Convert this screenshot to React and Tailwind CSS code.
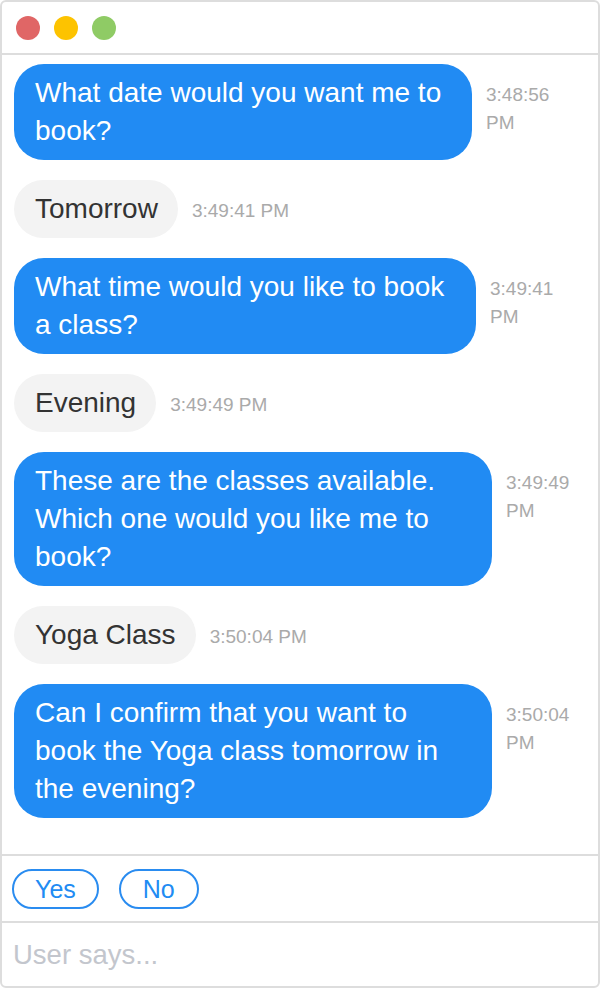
import React from 'react';

const messages = [
    { from: 'bot', lines: ['What date would you want me to', 'book?'], time: '3:48:56 PM', w: 'w-[458px]' },
    { from: 'user', lines: ['Tomorrow'], time: '3:49:41 PM' },
    { from: 'bot', lines: ['What time would you like to book', 'a class?'], time: '3:49:41 PM', w: 'w-[462px]' },
    { from: 'user', lines: ['Evening'], time: '3:49:49 PM' },
    { from: 'bot', lines: ['These are the classes available.', 'Which one would you like me to', 'book?'], time: '3:49:49 PM', w: 'w-[478px]' },
    { from: 'user', lines: ['Yoga Class'], time: '3:50:04 PM' },
    { from: 'bot', lines: ['Can I confirm that you want to', 'book the Yoga class tomorrow in', 'the evening?'], time: '3:50:04 PM', w: 'w-[478px]' },
];

const Message = ({ msg }) => {
    const isBot = msg.from === 'bot';
    return (
        <div className="flex items-start gap-[14px]">
            <div
                className={
                    isBot
                        ? `${msg.w} shrink-0 bg-[#218bf3] text-white rounded-[30px] pl-[21px] pr-[16px] py-[10px] text-[28px] leading-[38px] whitespace-nowrap`
                        : 'shrink-0 bg-[#f3f3f3] text-[#333] rounded-[30px] pl-[21px] pr-[20px] py-[10px] text-[28px] leading-[38px] whitespace-nowrap'
                }
            >
                {msg.lines.map((line, i) => (
                    <span key={i} className="block">{line}</span>
                ))}
            </div>
            <div
                className={
                    isBot
                        ? 'w-[76px] mt-[17px] text-[19px] leading-[28px] text-[#aaaaaa]'
                        : 'whitespace-nowrap mt-[17px] text-[19px] leading-[28px] text-[#aaaaaa]'
                }
            >
                {msg.time}
            </div>
        </div>
    );
};

const App = () => {
    return (
        <div
            className="w-[600px] h-[988px] bg-white border-2 border-[#dddddd] rounded-[6px] flex flex-col overflow-hidden"
            style={{ fontFamily: '"Liberation Sans", Arial, sans-serif' }}
        >
            {/* Title bar */}
            <div className="h-[53px] shrink-0 border-b-2 border-[#dddddd] flex items-center gap-[14px] pl-[14px]">
                <span className="w-6 h-6 rounded-full bg-[#e06666]" />
                <span className="w-6 h-6 rounded-full bg-[#fdc300]" />
                <span className="w-6 h-6 rounded-full bg-[#8fcb65]" />
            </div>

            {/* Conversation */}
            <div className="flex-1 min-h-0 px-[12px] pt-[9px] flex flex-col gap-5">
                {messages.map((m, i) => (
                    <Message key={i} msg={m} />
                ))}
            </div>

            {/* Quick replies */}
            <div className="shrink-0 border-t-2 border-[#dddddd] pl-[10px] pt-[13px] pb-[12px] flex gap-5">
                <button className="h-10 px-[21px] rounded-full border-2 border-[#2a8cf0] text-[#218bf3] text-[25px] leading-none">Yes</button>
                <button className="h-10 px-[22px] rounded-full border-2 border-[#2a8cf0] text-[#218bf3] text-[25px] leading-none">No</button>
            </div>

            {/* Input */}
            <div className="shrink-0 h-[65px] border-t-2 border-[#dddddd] flex items-center px-[11px]">
                <span className="text-[27.5px] text-[#c3c6cd]">User says...</span>
            </div>
        </div>
    );
};

export default App;
